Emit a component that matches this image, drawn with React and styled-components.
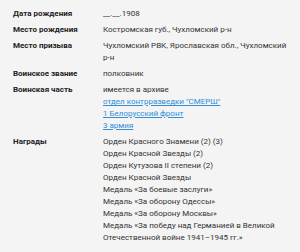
import React from "react";
import styled, { createGlobalStyle } from "styled-components";

const GlobalStyle = createGlobalStyle`
  html, body {
    margin: 0;
    padding: 0;
    background: #f4f4f4;
  }
`;

const Container = styled.div`
  width: 300px;
  height: 252px;
  overflow: hidden;
  box-sizing: border-box;
  padding: 8px 12px 0 13px;
  background: #f4f4f4;
  font-family: Roboto, "Liberation Sans", sans-serif;
  font-size: 8px;
  line-height: 12px;
  color: #333;
`;

const Row = styled.div`
  display: grid;
  grid-template-columns: 90px 1fr;
  margin-bottom: 4px;
`;

const Label = styled.div`
  font-weight: 700;
  color: #222;
`;

const Value = styled.div`
  display: flex;
  flex-direction: column;
`;

const Link = styled.a`
  color: #2f8fd8;
  text-decoration: underline;
  cursor: pointer;
`;

const rows = [
  { label: "Дата рождения", values: ["__.__.1908"] },
  { label: "Место рождения", values: ["Костромская губ., Чухломский р-н"] },
  {
    label: "Место призыва",
    values: ["Чухломский РВК, Ярославская обл., Чухломский р-н"],
  },
  { label: "Воинское звание", values: ["полковник"] },
  {
    label: "Воинская часть",
    values: ["имеется в архиве"],
    links: ["отдел контрразведки \"СМЕРШ\"", "1 Белорусский фронт", "3 армия"],
  },
  {
    label: "Награды",
    values: [
      "Орден Красного Знамени (2) (3)",
      "Орден Красной Звезды (2)",
      "Орден Кутузова II степени (2)",
      "Орден Красной Звезды",
      "Медаль «За боевые заслуги»",
      "Медаль «За оборону Одессы»",
      "Медаль «За оборону Москвы»",
      "Медаль «За победу над Германией в Великой Отечественной войне 1941–1945 гг.»",
    ],
  },
];

const App = () => {
  return (
    <>
      <GlobalStyle />
      <Container>
        {rows.map((row) => (
          <Row key={row.label}>
            <Label>{row.label}</Label>
            <Value>
              {row.values.map((v) => (
                <span key={v}>{v}</span>
              ))}
              {row.links &&
                row.links.map((l) => <Link key={l}>{l}</Link>)}
            </Value>
          </Row>
        ))}
      </Container>
    </>
  );
};

export default App;
